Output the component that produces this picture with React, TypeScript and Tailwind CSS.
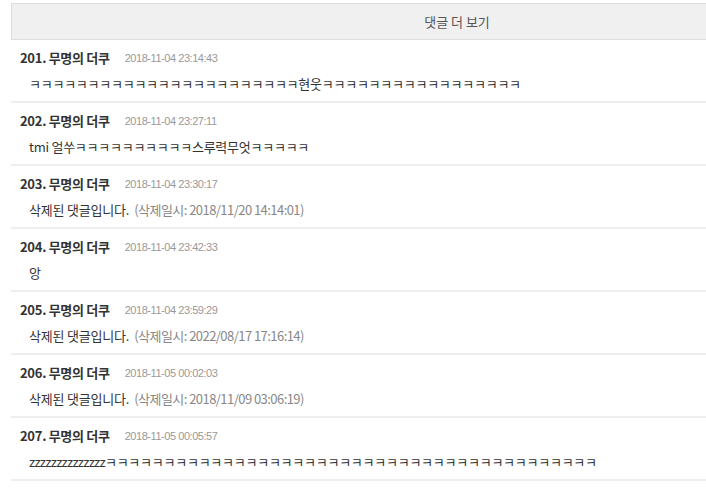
import React from "react";

const K = (n: number) => "ㅋ".repeat(n);

type C = { no: number; date: string; body?: React.ReactNode; deleted?: string };

const comments: C[] = [
  { no: 201, date: "2018-11-04 23:14:43", body: K(23) + "현웃" + K(17) },
  { no: 202, date: "2018-11-04 23:27:11", body: "tmi 얼쑤" + K(10) + "스루력무엇" + K(5) },
  { no: 203, date: "2018-11-04 23:30:17", deleted: "2018/11/20 14:14:01" },
  { no: 204, date: "2018-11-04 23:42:33", body: "앙" },
  { no: 205, date: "2018-11-04 23:59:29", deleted: "2022/08/17 17:16:14" },
  { no: 206, date: "2018-11-05 00:02:03", deleted: "2018/11/09 03:06:19" },
  {
    no: 207,
    date: "2018-11-05 00:05:57",
    body: (
      <>
        <span className="tracking-[-0.75px]">{"z".repeat(14)}</span>
        {K(42)}
      </>
    ),
  },
];

const ko = { fontFamily: '"Noto Sans CJK KR", "Noto Sans", sans-serif' };

export default function App() {
  return (
    <div className="w-[706px] h-[488px] overflow-hidden bg-white">
      <div className="ml-[11px] mt-[3px] w-[892px]" style={ko}>
        <div className="h-[37px] flex items-center justify-center bg-[#f0f0f0] border border-[#dddddd] text-[13px] text-[#555]">
          댓글 더 보기
        </div>
        {comments.map((c) => (
          <div key={c.no} className="pt-[10px] pb-[7px] border-b-2 border-[#eeeeee]">
            <div className="h-4 flex items-center pl-[9px]">
              <span className="text-[13px] font-bold text-[#333] tracking-[-0.3px]">
                {c.no}. 무명의 더쿠
              </span>
              <span
                className="ml-[15px] text-[11px] text-[#999]"
                style={{ fontFamily: '"Liberation Sans", sans-serif', letterSpacing: "-0.45px" }}
              >
                {c.date}
              </span>
            </div>
            <div className="mt-2 h-5 flex items-center pl-[18px] text-[13px] text-[#333] whitespace-nowrap">
              {c.deleted ? (
                <>
                  <span className="tracking-[-0.2px]">삭제된 댓글입니다.</span>
                  <span className="ml-[5px] text-[#888] tracking-[-0.55px]">(삭제일시: {c.deleted})</span>
                </>
              ) : (
                <span className="tracking-[-0.25px]">{c.body}</span>
              )}
            </div>
          </div>
        ))}
      </div>
    </div>
  );
}
